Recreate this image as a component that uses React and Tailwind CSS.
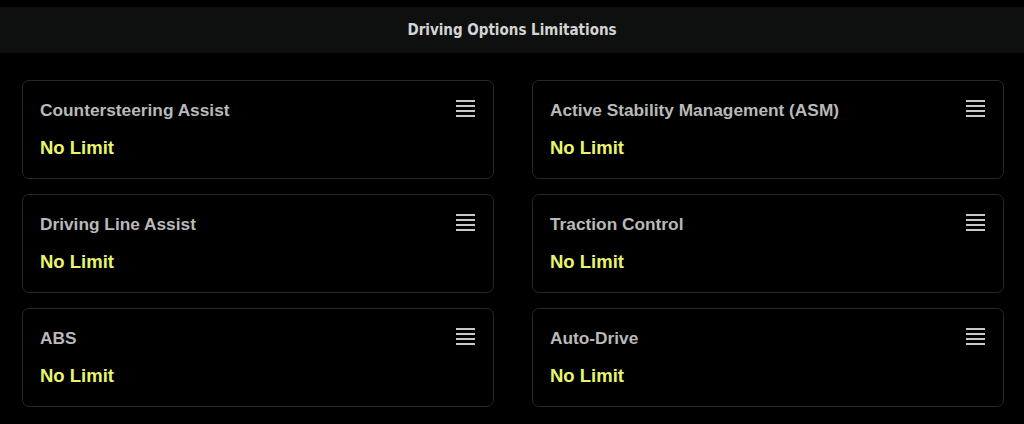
import React from 'react';

const options = [
    'Countersteering Assist',
    'Active Stability Management (ASM)',
    'Driving Line Assist',
    'Traction Control',
    'ABS',
    'Auto-Drive',
];

const MenuIcon = () => (
    <svg width="19" height="17" viewBox="0 0 19 17" className="shrink-0">
        {[1, 6, 11, 16].map(y => (
            <rect key={y} x="0" y={y - 1} width="19" height="2" fill="#c8c8c8" />
        ))}
    </svg>
);

const OptionCard = ({ title }) => (
    <div className="h-[99px] rounded-[7px] border border-[#262828] bg-black pl-[17px] pr-[18px] pt-[19px]">
        <div className="flex items-start justify-between">
            <span className="text-[17.3px] font-bold leading-[20px] text-[#b9b9b9]">{title}</span>
            <MenuIcon />
        </div>
        <div className="mt-[17px] text-[18.5px] font-bold leading-[22px] text-[#e8f56c]">No Limit</div>
    </div>
);

export default function App() {
    return (
        <div className="h-[424px] w-[1024px] overflow-hidden bg-black" style={{ fontFamily: '"Liberation Sans", Arial, sans-serif' }}>
            <div className="h-[7px]" />
            <div className="flex h-[46px] items-center justify-center bg-[#0e1010]">
                <span className="text-[15px] font-bold text-[#d4d4d4]" style={{ fontFamily: '"DejaVu Sans Condensed", "Liberation Sans Narrow", sans-serif' }}>
                    Driving Options Limitations
                </span>
            </div>
            <div className="grid grid-cols-2 gap-x-[38px] gap-y-[15px] pl-[22px] pr-[20px] pt-[27px]">
                {options.map(o => (
                    <OptionCard key={o} title={o} />
                ))}
            </div>
        </div>
    );
}
